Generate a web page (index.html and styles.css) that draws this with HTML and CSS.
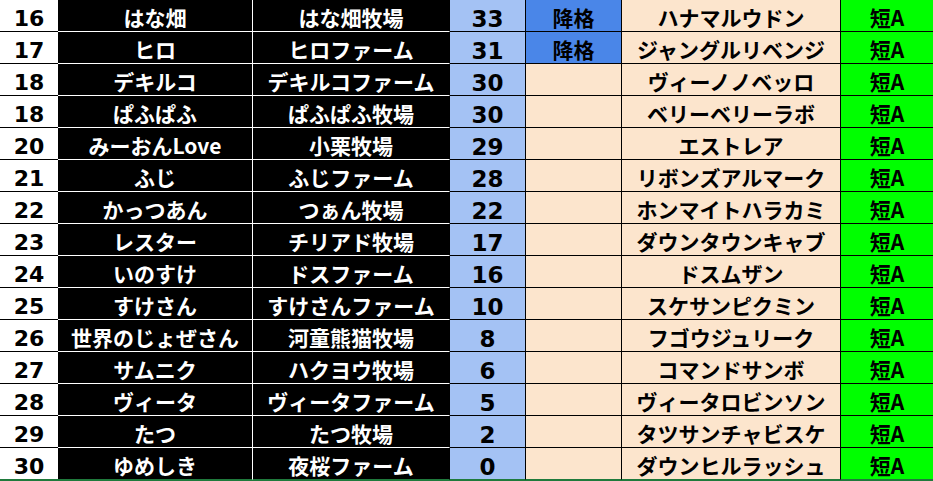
FILE: index.html
```html
<!DOCTYPE html>
<html lang="ja">
<head>
<meta charset="utf-8">
<link rel="stylesheet" href="styles.css">
</head>
<body>
<div class="sheet">
  <div class="row"><div class="c rank">16</div><div class="c name">はな畑</div><div class="c farm">はな畑牧場</div><div class="c pts">33</div><div class="c st down">降格</div><div class="c horse">ハナマルウドン</div><div class="c cls">短A</div></div>
  <div class="row"><div class="c rank">17</div><div class="c name">ヒロ</div><div class="c farm">ヒロファーム</div><div class="c pts">31</div><div class="c st down">降格</div><div class="c horse">ジャングルリベンジ</div><div class="c cls">短A</div></div>
  <div class="row"><div class="c rank">18</div><div class="c name">デキルコ</div><div class="c farm">デキルコファーム</div><div class="c pts">30</div><div class="c st"></div><div class="c horse">ヴィーノノベッロ</div><div class="c cls">短A</div></div>
  <div class="row"><div class="c rank">18</div><div class="c name">ぱふぱふ</div><div class="c farm">ぱふぱふ牧場</div><div class="c pts">30</div><div class="c st"></div><div class="c horse">ベリーベリーラボ</div><div class="c cls">短A</div></div>
  <div class="row"><div class="c rank">20</div><div class="c name">みーおんLove</div><div class="c farm">小栗牧場</div><div class="c pts">29</div><div class="c st"></div><div class="c horse">エストレア</div><div class="c cls">短A</div></div>
  <div class="row"><div class="c rank">21</div><div class="c name">ふじ</div><div class="c farm">ふじファーム</div><div class="c pts">28</div><div class="c st"></div><div class="c horse">リボンズアルマーク</div><div class="c cls">短A</div></div>
  <div class="row"><div class="c rank">22</div><div class="c name">かっつあん</div><div class="c farm">つぁん牧場</div><div class="c pts">22</div><div class="c st"></div><div class="c horse">ホンマイトハラカミ</div><div class="c cls">短A</div></div>
  <div class="row"><div class="c rank">23</div><div class="c name">レスター</div><div class="c farm">チリアド牧場</div><div class="c pts">17</div><div class="c st"></div><div class="c horse">ダウンタウンキャブ</div><div class="c cls">短A</div></div>
  <div class="row"><div class="c rank">24</div><div class="c name">いのすけ</div><div class="c farm">ドスファーム</div><div class="c pts">16</div><div class="c st"></div><div class="c horse">ドスムザン</div><div class="c cls">短A</div></div>
  <div class="row"><div class="c rank">25</div><div class="c name">すけさん</div><div class="c farm">すけさんファーム</div><div class="c pts">10</div><div class="c st"></div><div class="c horse">スケサンピクミン</div><div class="c cls">短A</div></div>
  <div class="row"><div class="c rank">26</div><div class="c name">世界のじょぜさん</div><div class="c farm">河童熊猫牧場</div><div class="c pts">8</div><div class="c st"></div><div class="c horse">フゴウジュリーク</div><div class="c cls">短A</div></div>
  <div class="row"><div class="c rank">27</div><div class="c name">サムニク</div><div class="c farm">ハクヨウ牧場</div><div class="c pts">6</div><div class="c st"></div><div class="c horse">コマンドサンボ</div><div class="c cls">短A</div></div>
  <div class="row"><div class="c rank">28</div><div class="c name">ヴィータ</div><div class="c farm">ヴィータファーム</div><div class="c pts">5</div><div class="c st"></div><div class="c horse">ヴィータロビンソン</div><div class="c cls">短A</div></div>
  <div class="row"><div class="c rank">29</div><div class="c name">たつ</div><div class="c farm">たつ牧場</div><div class="c pts">2</div><div class="c st"></div><div class="c horse">タツサンチャビスケ</div><div class="c cls">短A</div></div>
  <div class="row last"><div class="c rank">30</div><div class="c name">ゆめしき</div><div class="c farm">夜桜ファーム</div><div class="c pts">0</div><div class="c st"></div><div class="c horse">ダウンヒルラッシュ</div><div class="c cls">短A</div></div>
  <div class="sel"></div>
</div>
</body>
</html>
```

FILE: styles.css
```css
html, body {
  margin: 0;
  padding: 0;
  background: #ffffff;
}
.sheet {
  width: 933px;
  font-family: "Noto Sans CJK JP", "Noto Sans", sans-serif;
  font-weight: 700;
  font-size: 21px;
}
.row {
  display: grid;
  grid-template-columns: 58px 195px 197px 76px 96px 219px 92px;
  height: 32px;
}
.c {
  box-sizing: border-box;
  display: flex;
  align-items: center;
  justify-content: center;
  padding-top: 3px;
  line-height: 20px;
  white-space: nowrap;
  color: #000;
  border-bottom: 1px solid #000;
  border-right: 1px solid #000;
}
.rank {
  background: #ffffff;
  border-right: none;
  font-family: "DejaVu Sans", sans-serif;
  font-size: 22px;
  padding-top: 6px;
}
.name {
  background: #000;
  color: #fff;
  border-right-color: #fff;
  border-bottom-color: #fff;
}
.farm {
  background: #000;
  color: #fff;
  border-bottom-color: #fff;
}
.pts {
  background: #a4c2f4;
  font-family: "DejaVu Sans", sans-serif;
  font-size: 23px;
  padding-top: 6px;
}
.st {
  background: #fce5cd;
}
.st.down {
  background: #4a86e8;
}
.horse {
  background: #fce5cd;
}
.cls {
  background: #00ff00;
  border-right: none;
}
.last .c {
  border-bottom-color: #1f7a3c;
}
.sel {
  height: 1px;
  background: #1f7a3c;
}
```
